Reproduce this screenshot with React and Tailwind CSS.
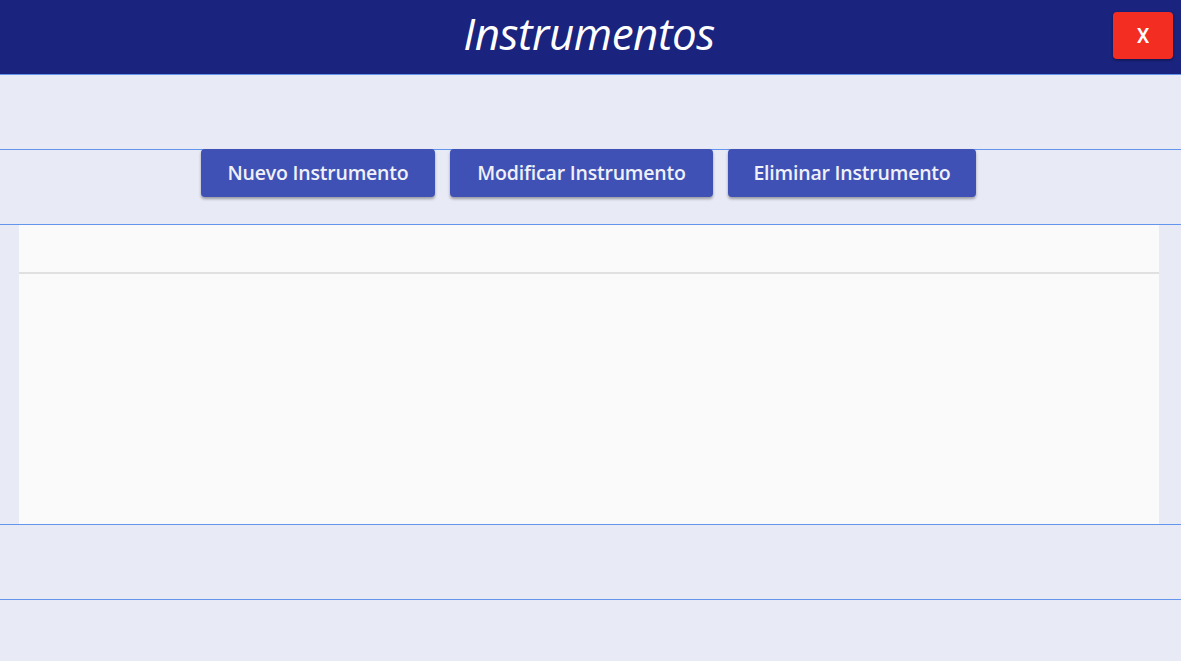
export default function App() {
  const acciones = [
    { t: 'Nuevo Instrumento', w: 'w-[234px]' },
    { t: 'Modificar Instrumento', w: 'w-[263px]' },
    { t: 'Eliminar Instrumento', w: 'w-[248px]' },
  ];

  return (
    <div className="w-[1181px] h-[661px] overflow-hidden flex flex-col bg-[#e8eaf6] font-['Open_Sans',sans-serif]">
      {/* cabecera */}
      <div className="relative h-[75px] shrink-0 bg-[#1a237e] border-b border-[#6495ed] flex items-center justify-center">
        <h1 className="text-white italic text-[44px] leading-none -mt-[8px] pr-[3px] tracking-[-0.5px]">Instrumentos</h1>
        <button className="absolute right-[8px] top-[12px] w-[60px] h-[47px] rounded-[4px] bg-[#f42d22] text-white text-[20px] font-medium font-['Roboto',sans-serif] shadow-[0_1px_3px_rgba(0,0,0,0.45)]">
          X
        </button>
      </div>

      <div className="h-[75px] shrink-0 border-b border-[#6495ed]" />

      <div className="h-[75px] shrink-0 border-b border-[#6495ed] flex justify-center items-start gap-[15px] pr-[4px]">
        {acciones.map((a) => (
          <button
            key={a.t}
            className={`${a.w} -mt-px h-[48px] rounded-[4px] bg-[#3f51b5] text-[#f0f0f8] text-[19.5px] font-semibold tracking-[-0.2px] shadow-[0_2px_3px_rgba(0,0,0,0.35)]`}
          >
            {a.t}
          </button>
        ))}
      </div>

      <div className="h-[300px] shrink-0 border-b border-[#6495ed] pl-[19px] pr-[22px]">
        <div className="h-full bg-[#fafafa]">
          <div className="h-[49px] border-b-2 border-[#e0e0e0]" />
        </div>
      </div>

      <div className="h-[75px] shrink-0 border-b border-[#6495ed]" />

      <div className="flex-1" />
    </div>
  );
}
